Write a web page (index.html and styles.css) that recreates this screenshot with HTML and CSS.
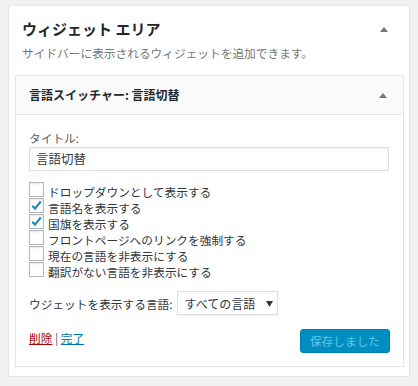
FILE: index.html
```html
<!DOCTYPE html>
<html lang="ja">
<head>
<meta charset="utf-8">
<link rel="stylesheet" href="styles.css">
</head>
<body>
<div class="panel">
  <div class="panel-head">
    <h2 class="panel-title">ウィジェット エリア</h2>
    <svg class="arrow" width="8" height="5" viewBox="0 0 8 5"><path d="M0 5 L4 0 L8 5 Z" fill="#72777c"/></svg>
  </div>
  <p class="panel-desc">サイドバーに表示されるウィジェットを追加できます。</p>
  <div class="widget">
    <div class="widget-head">
      <h3 class="widget-title">言語スイッチャー: 言語切替</h3>
      <svg class="arrow" width="8" height="5" viewBox="0 0 8 5"><path d="M0 5 L4 0 L8 5 Z" fill="#72777c"/></svg>
    </div>
    <div class="widget-body">
      <label class="field-label">タイトル:</label>
      <div class="text-input">言語切替</div>
      <ul class="checklist">
        <li class="check-row"><span class="box"></span><span class="check-text">ドロップダウンとして表示する</span></li>
        <li class="check-row"><span class="box"><svg width="13" height="13" viewBox="0 0 13 13"><path d="M2.2 6.8 L5 9.6 L10.8 2.4" fill="none" stroke="#1e8cbe" stroke-width="2.2"/></svg></span><span class="check-text">言語名を表示する</span></li>
        <li class="check-row"><span class="box"><svg width="13" height="13" viewBox="0 0 13 13"><path d="M2.2 6.8 L5 9.6 L10.8 2.4" fill="none" stroke="#1e8cbe" stroke-width="2.2"/></svg></span><span class="check-text">国旗を表示する</span></li>
        <li class="check-row"><span class="box"></span><span class="check-text">フロントページへのリンクを強制する</span></li>
        <li class="check-row"><span class="box"></span><span class="check-text">現在の言語を非表示にする</span></li>
        <li class="check-row"><span class="box"></span><span class="check-text">翻訳がない言語を非表示にする</span></li>
      </ul>
      <div class="lang-row">
        <span class="lang-label">ウジェットを表示する言語:</span>
        <div class="select"><span>すべての言語</span><svg width="7" height="7" viewBox="0 0 7 7"><path d="M0 1 L7 1 L3.5 7 Z" fill="#32373c"/></svg></div>
      </div>
      <div class="actions">
        <div class="links"><a class="delete">削除</a> <span class="sep">|</span> <a class="done">完了</a></div>
        <div class="button">保存しました</div>
      </div>
    </div>
  </div>
</div>
</body>
</html>
```

FILE: styles.css
```css
body {
  margin: 0;
  background: #f1f1f1;
  font-family: "Noto Sans CJK JP", "Noto Sans", sans-serif;
  font-size: 11.7px;
  color: #32373c;
}
.panel {
  margin: 5px 8px 0;
  width: 402px;
  height: 372px;
  box-sizing: border-box;
  background: #fff;
  border: 1px solid #e5e5e5;
  box-shadow: 0 1px 1px rgba(0,0,0,0.04);
  padding: 13px 5px 0 6px;
}
.panel-head {
  display: flex;
  align-items: center;
  justify-content: space-between;
  padding: 0 16px 0 7px;
  height: 20px;
}
.panel-title {
  margin: 0;
  font-size: 15px;
  font-weight: bold;
  line-height: 20px;
  color: #23282d;
}
.panel-desc {
  margin: 6px 0 0;
  padding-left: 7px;
  line-height: 16px;
  color: #72777c;
}
.widget {
  margin-top: 14px;
  border: 1px solid #e5e5e5;
  background: #fff;
}
.widget-head {
  height: 38px;
  background: #fafafa;
  border-bottom: 1px solid #e5e5e5;
  display: flex;
  align-items: center;
  justify-content: space-between;
  padding: 0 16px 0 13px;
}
.widget-title {
  margin: 0;
  font-size: 12px;
  font-weight: bold;
  color: #23282d;
  line-height: 16px;
}
.widget-body {
  padding: 15px 14px 13px 13px;
}
.field-label {
  display: block;
  line-height: 16px;
  color: #555d66;
}
.text-input {
  margin-top: 1px;
  height: 24px;
  box-sizing: border-box;
  border: 1px solid #ddd;
  box-shadow: inset 0 1px 2px rgba(0,0,0,0.07);
  padding: 0 6px;
  font-size: 12.5px;
  line-height: 22px;
  color: #32373c;
}
.checklist {
  list-style: none;
  margin: 11px 0 0;
  padding: 0;
}
.check-row {
  display: flex;
  align-items: flex-start;
  height: 16px;
}
.box {
  width: 15px;
  height: 15px;
  box-sizing: border-box;
  border: 1px solid #b4b9be;
  background: #fff;
  box-shadow: inset 0 1px 2px rgba(0,0,0,0.1);
  margin-right: 4px;
  flex: none;
  display: flex;
  align-items: center;
  justify-content: center;
}
.box svg { display: block; }
.check-text {
  line-height: 20px;
  color: #32373c;
}
.lang-row {
  margin-top: 13px;
  display: flex;
  align-items: center;
  height: 24px;
}
.lang-label {
  color: #32373c;
  margin-right: 4px;
}
.select {
  width: 101px;
  height: 24px;
  box-sizing: border-box;
  border: 1px solid #ddd;
  box-shadow: 0 1px 1px rgba(0,0,0,0.04);
  display: flex;
  align-items: center;
  justify-content: space-between;
  padding: 0 4px 0 7px;
  font-size: 12px;
  color: #32373c;
}
.select svg { display: block; }
.actions {
  margin-top: 14px;
  display: flex;
  justify-content: space-between;
  align-items: flex-start;
}
.links {
  margin-top: 1px;
  line-height: 16px;
}
.delete {
  color: #a00;
  text-decoration: underline;
}
.done {
  color: #0073aa;
  text-decoration: underline;
}
.sep { color: #555; }
.button {
  width: 90px;
  height: 24px;
  box-sizing: border-box;
  margin-right: -1px;
  background: #008ec2;
  border: 1px solid #0083b3;
  border-radius: 3px;
  color: #66c6e4;
  text-align: center;
  line-height: 22px;
}
```
